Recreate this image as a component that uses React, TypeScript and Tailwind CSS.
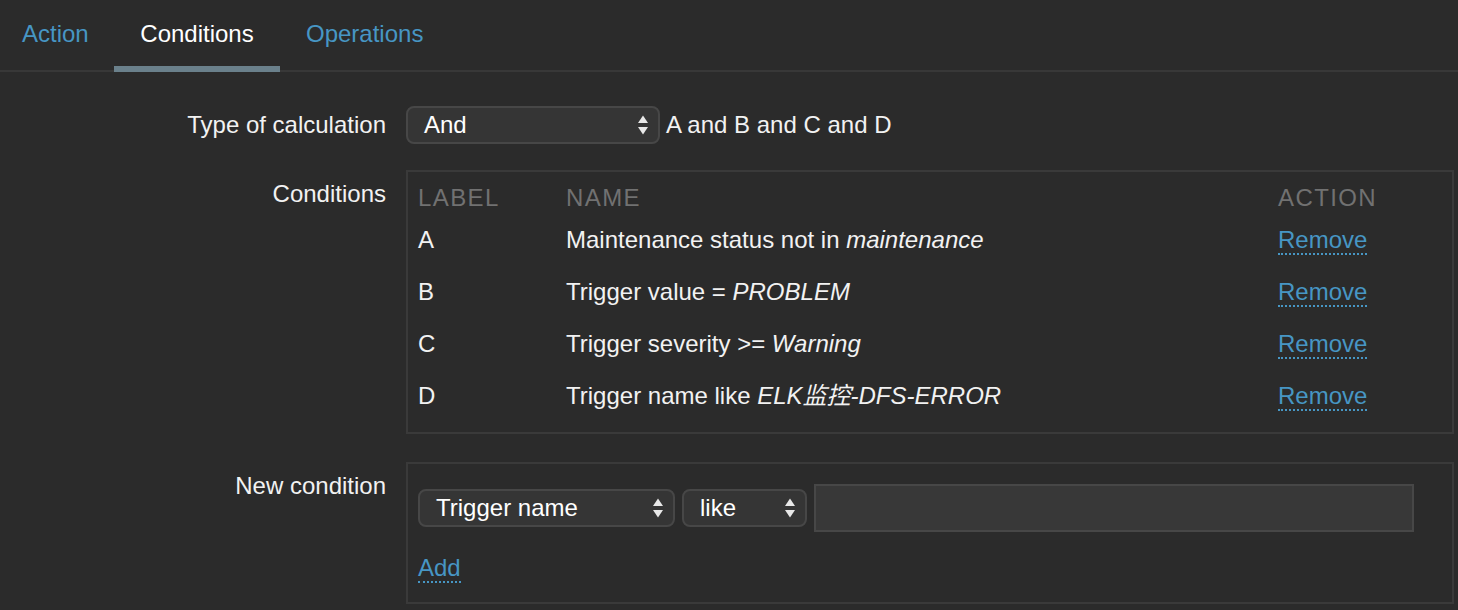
const font = { fontFamily: '"Liberation Sans", "Noto Sans CJK SC", Arial, sans-serif' };

function Arrows() {
  return (
    <svg width="12" height="24" viewBox="0 0 12 24" className="shrink-0">
      <path d="M6 2.5 L11 10 L1 10 Z" fill="#e8e8e8" />
      <path d="M6 21.5 L11 14 L1 14 Z" fill="#e8e8e8" />
    </svg>
  );
}

function Select({ value, width, textPad }: { value: string; width: string; textPad: string }) {
  return (
    <div
      className={`flex h-[38px] items-center justify-between rounded-[8px] border-2 border-[#474747] bg-[#353535] pr-[9px] text-white ${width} ${textPad}`}
    >
      <span>{value}</span>
      <Arrows />
    </div>
  );
}

function Link({ children }: { children: string }) {
  return (
    <a className="border-b-2 border-dotted border-[#4796c4] leading-[26px] text-[#4796c4]" href="#">
      {children}
    </a>
  );
}

const rows = [
  { label: "A", text: "Maintenance status not in ", em: "maintenance" },
  { label: "B", text: "Trigger value = ", em: "PROBLEM" },
  { label: "C", text: "Trigger severity >= ", em: "Warning" },
  { label: "D", text: "Trigger name like ", em: "ELK监控-DFS-ERROR" },
];

export default function App() {
  return (
    <div className="min-h-[610px] bg-[#2b2b2b] text-[24px] text-[#f2f2f2]" style={font}>
      <div className="flex h-[72px] border-b-2 border-[#383838]">
        <div className="flex h-[72px] w-[114px] items-center pb-[4px] pl-[22px] text-[#4796c4]">Action</div>
        <div className="flex h-[72px] w-[166px] items-center justify-center border-b-[6px] border-[#6a808b] pt-[2px] text-white">
          Conditions
        </div>
        <div className="flex h-[72px] items-center pb-[4px] pl-[26px] text-[#4796c4]">Operations</div>
      </div>

      <div className="grid grid-cols-[386px_1fr] gap-x-[20px] pr-[4px] pt-[34px]">
        <div className="flex h-[38px] items-center justify-end">Type of calculation</div>
        <div className="flex items-center gap-[6px]">
          <Select value="And" width="w-[254px]" textPad="pl-[16px]" />
          <span>A and B and C and D</span>
        </div>

        <div className="mt-[26px] pt-[10px] text-right leading-[28px]">Conditions</div>
        <div className="mt-[26px] border-2 border-[#3a3a3a] px-[10px] pb-[10px] pt-[8px]">
          <div className="grid h-[32px] grid-cols-[148px_1fr_164px] items-center tracking-[1.4px] text-[#717171]">
            <span>LABEL</span>
            <span>NAME</span>
            <span>ACTION</span>
          </div>
          {rows.map((r, i) => (
            <div
              key={r.label}
              className={`grid h-[52px] grid-cols-[148px_1fr_164px] items-center ${i === 0 ? "mt-[2px]" : ""}`}
            >
              <span>{r.label}</span>
              <span>
                {r.text}
                <i>{r.em}</i>
              </span>
              <span>
                <Link>Remove</Link>
              </span>
            </div>
          ))}
        </div>

        <div className="mt-[28px] pt-[10px] text-right leading-[28px]">New condition</div>
        <div className="mt-[28px] border-2 border-[#3a3a3a] px-[10px] pb-[20px] pt-[20px]">
          <div className="flex items-center gap-[7px]">
            <Select value="Trigger name" width="w-[257px]" textPad="pl-[16px]" />
            <Select value="like" width="w-[125px]" textPad="pl-[16px]" />
            <div className="h-[48px] w-[600px] border-2 border-[#474747] bg-[#383838]" />
          </div>
          <div className="mt-[22px] leading-[28px]">
            <Link>Add</Link>
          </div>
        </div>
      </div>
    </div>
  );
}
